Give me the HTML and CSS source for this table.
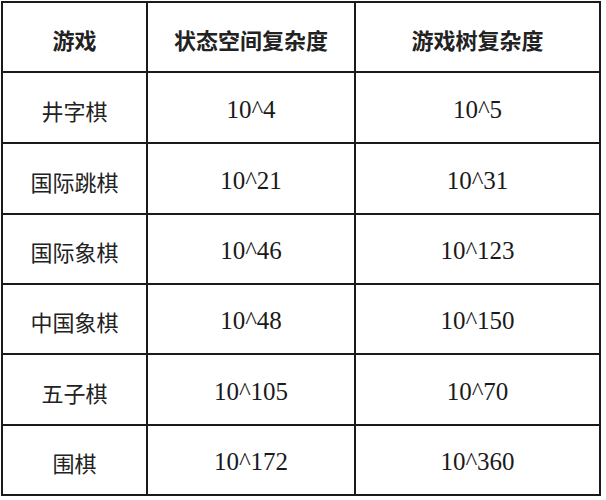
FILE: index.html
```html
<!DOCTYPE html>
<html lang="zh">
<head>
<meta charset="utf-8">
<link rel="stylesheet" href="styles.css">
</head>
<body>
<div class="page">
  <div class="grid">
    <div class="cell head r0">游戏</div>
    <div class="cell head r0">状态空间复杂度</div>
    <div class="cell head r0">游戏树复杂度</div>

    <div class="cell name">井字棋</div>
    <div class="cell num">10^4</div>
    <div class="cell num">10^5</div>

    <div class="cell name">国际跳棋</div>
    <div class="cell num">10^21</div>
    <div class="cell num">10^31</div>

    <div class="cell name">国际象棋</div>
    <div class="cell num">10^46</div>
    <div class="cell num">10^123</div>

    <div class="cell name">中国象棋</div>
    <div class="cell num">10^48</div>
    <div class="cell num">10^150</div>

    <div class="cell name">五子棋</div>
    <div class="cell num">10^105</div>
    <div class="cell num">10^70</div>

    <div class="cell name">围棋</div>
    <div class="cell num">10^172</div>
    <div class="cell num">10^360</div>
  </div>
</div>
</body>
</html>
```
FILE: styles.css
```css
html, body {
  margin: 0;
  padding: 0;
  background: #ffffff;
}

.page {
  padding: 1px 0 0 1px;
}

.grid {
  width: 600px;
  box-sizing: border-box;
  display: grid;
  grid-template-columns: 143px 206px 243px;
  grid-template-rows: 68px 69px 69px 68px 68px 69px 68px;
  gap: 2px;
  padding: 2px;
  background: #1a1a1a;
}

.cell {
  background: #ffffff;
  display: flex;
  align-items: center;
  justify-content: center;
  color: #222222;
  padding-top: 4px;
  box-sizing: border-box;
}

.head {
  font-family: "Noto Sans CJK SC", "Noto Sans", sans-serif;
  font-weight: 700;
  font-size: 22px;
}

.name {
  font-family: "Noto Sans CJK SC", "Noto Sans", sans-serif;
  font-weight: 400;
  font-size: 22px;
}

.num {
  font-family: "Liberation Serif", serif;
  font-size: 25px;
  color: #1a1a1a;
}
```
